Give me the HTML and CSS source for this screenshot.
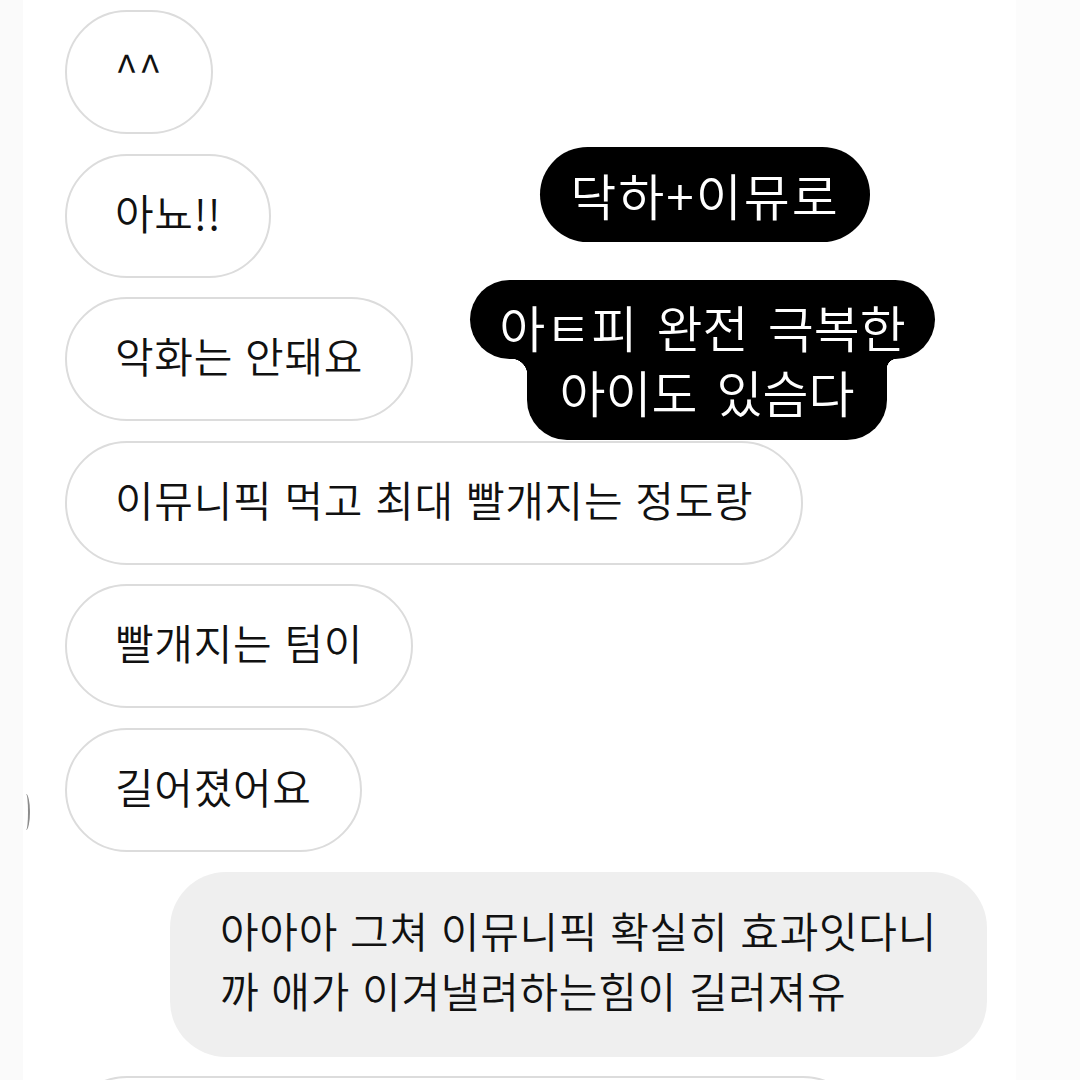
FILE: index.html
```html
<!DOCTYPE html>
<html>
<head>
    <meta charset="utf-8">
    <title>DM 캡처</title>
    <link rel="stylesheet" href="styles.css">
</head>
<body>
<div id="chat">
    <!-- 받은 메시지 -->
    <div class="row"><div class="bubble">^^</div></div>
    <div class="row"><div class="bubble">아뇨!!</div></div>
    <div class="row"><div class="bubble">악화는 안돼요</div></div>
    <div class="row"><div class="bubble">이뮤니픽 먹고 최대 빨개지는 정도랑</div></div>
    <div class="row"><div class="bubble">빨개지는 텀이</div></div>
    <div class="row">
        <span class="avatar-edge"></span>
        <div class="bubble">길어졌어요</div>
    </div>

    <!-- 보낸 메시지 -->
    <div class="row mine">
        <div class="bubble-mine">아아아 그쳐 이뮤니픽 확실히 효과잇다니<br>까 애가 이겨낼려하는힘이 길러져유</div>
    </div>

    <div class="row"><div class="bubble bubble-cut"></div></div>
</div>

<!-- 스토리 텍스트 -->
<div id="label-top" class="label">닥하+이뮤로</div>
<div id="label-bottom">
    <div class="label-line first">아ㅌ피 완전 극복한</div>
    <div class="label-line second">아이도 있슴다</div>
</div>
</body>
</html>
```

FILE: styles.css
```css
html, body {
    height: 1080px;
    overflow: hidden;
}

body {
    margin: 0;
    padding: 0;
    font-family: "Noto Sans CJK KR", "Noto Sans", sans-serif;
    font-weight: 350;
    color: #111;
    background: linear-gradient(to right, #fafafa 23px, #fff 23px, #fff 1016px, #fcfcfc 1016px);
    position: relative;
}

/* 대화 목록 */
#chat {
    display: flex;
    flex-direction: column;
    gap: 19.6px;
    padding: 10px 93px 0 65px;
}

.row {
    display: flex;
    position: relative;
}

.row.mine {
    justify-content: flex-end;
}

.bubble {
    height: 124px;
    box-sizing: border-box;
    border: 2px solid #dcdcdc;
    border-radius: 62px;
    background-color: #fff;
    padding: 0 48px 8px;
    font-size: 42px;
    line-height: 112px;
    letter-spacing: 0.7px;
    word-spacing: 2px;
    white-space: nowrap;
}

.bubble-cut {
    width: 800px;
}

.bubble-mine {
    background-color: #efefef;
    border-radius: 56px;
    padding: 28px 50px 37px;
    font-size: 42px;
    line-height: 60px;
    letter-spacing: 0.7px;
    word-spacing: 2px;
    white-space: nowrap;
}

.avatar-edge {
    position: absolute;
    left: -39px;
    top: 66px;
    width: 2px;
    height: 36px;
    border-right: 2px solid #8c8c8c;
    border-radius: 0 4px 4px 0 / 0 18px 18px 0;
}

/* 검은 라벨 */
.label {
    position: absolute;
    left: 540px;
    top: 147px;
    width: 330px;
    height: 95px;
    border-radius: 48px;
    background-color: #000;
    color: #fff;
    text-align: center;
    font-size: 50px;
    line-height: 95px;
    letter-spacing: 2px;
}

#label-bottom {
    position: absolute;
    left: 470px;
    top: 280px;
    width: 465px;
    display: flex;
    flex-direction: column;
    align-items: center;
}

.label-line {
    background-color: #000;
    color: #fff;
    text-align: center;
    font-size: 50px;
    line-height: 65px;
    letter-spacing: 0;
    word-spacing: 8px;
    white-space: nowrap;
    position: relative;
}

.label-line.first {
    width: 465px;
    padding-top: 14px;
    border-radius: 40px;
}

.label-line.second {
    width: 360px;
    margin-left: 9px;
    padding-bottom: 16px;
    border-radius: 0 0 40px 40px;
}

.label-line.second::before,
.label-line.second::after {
    content: "";
    position: absolute;
    top: 0;
}

.label-line.second::before {
    left: -16px;
    width: 16px;
    height: 16px;
    background: radial-gradient(circle at 0 100%, transparent 16px, #000 16.5px);
}

.label-line.second::after {
    right: -10px;
    width: 10px;
    height: 10px;
    background: radial-gradient(circle at 100% 100%, transparent 10px, #000 10.5px);
}
```
